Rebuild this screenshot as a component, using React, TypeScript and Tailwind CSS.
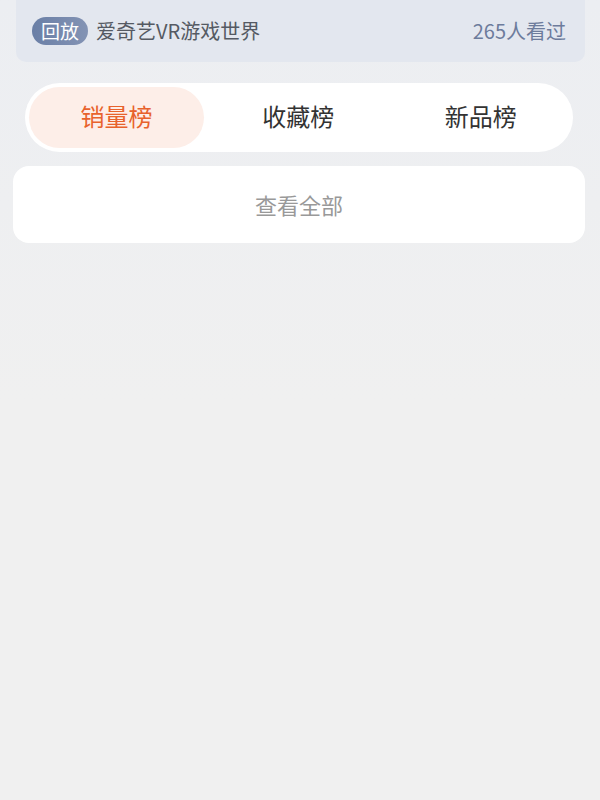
const font = 'font-["Noto_Sans_CJK_SC","Noto_Sans",sans-serif]';

const tabs = ['销量榜', '收藏榜', '新品榜'];

export default function App() {
  const active = 0;
  return (
    <div className={`${font} w-[600px] h-[800px] bg-gradient-to-b from-[#eceef2] via-[#f0f0f0] to-[#f0f0f0] overflow-hidden`}>
      <div className="ml-4 mr-[15px] h-[62px] bg-[#e3e7ef] rounded-b-[10px] flex items-center pl-4 pr-[19px]">
        <span className="h-7 px-[9px] rounded-full bg-gradient-to-r from-[#6a7fa6] to-[#8393b4] text-white text-[19px] leading-7">
          回放
        </span>
        <span className="ml-2 text-[20px] text-[#555a63] leading-7">爱奇艺VR游戏世界</span>
        <span className="ml-auto text-[20px] text-[#6d7c9c] leading-7">265人看过</span>
      </div>

      <div className="mt-[21px] ml-[25px] mr-[27px] h-[69px] bg-white rounded-full p-1 flex">
        {tabs.map((t, i) => (
          <div
            key={t}
            className={
              i === active
                ? 'w-[175px] rounded-full bg-[#fdeee8] text-[#e8622c] text-[24px] flex items-center justify-center pb-[3px]'
                : 'flex-1 pl-[6px] text-[#333333] text-[24px] flex items-center justify-center pb-[3px]'
            }
          >
            {t}
          </div>
        ))}
      </div>

      <div className="mt-[14px] ml-[13px] mr-[15px] h-[77px] bg-white rounded-[16px] flex items-center justify-center text-[22px] text-[#999999]">
        查看全部
      </div>
    </div>
  );
}
